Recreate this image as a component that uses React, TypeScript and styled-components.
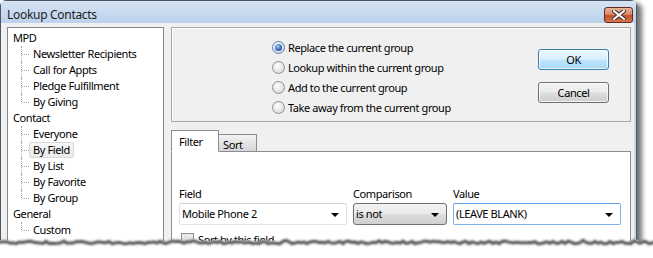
import React from 'react';
import styled, { createGlobalStyle } from 'styled-components';

const GlobalStyle = createGlobalStyle`
  html, body {
    margin: 0;
    padding: 0;
    background: #ffffff;
  }
  body {
    font-family: "Noto Sans", "Liberation Sans", sans-serif;
    font-size: 11px;
    letter-spacing: -0.4px;
    color: #000;
  }
`;

const tree = [
  { label: 'MPD', children: ['Newsletter Recipients', 'Call for Appts', 'Pledge Fulfillment', 'By Giving'] },
  { label: 'Contact', children: ['Everyone', 'By Field', 'By List', 'By Favorite', 'By Group'] },
  { label: 'General', children: ['Custom'] },
];

const modes = [
  'Replace the current group',
  'Lookup within the current group',
  'Add to the current group',
  'Take away from the current group',
];

// jagged "torn paper" edge along the bottom of the screenshot
const tornPoints = (() => {
  let s = 11;
  const rnd = () => {
    s = (s * 9301 + 49297) % 233280;
    return s / 233280;
  };
  const pts: string[] = [];
  for (let x = -2; x <= 656; x += 3) {
    const y = 5.5 + (rnd() - 0.5) * 2.6 + (rnd() > 0.85 ? -1 : 0);
    pts.push(`${x},${y.toFixed(1)}`);
  }
  return pts;
})();

export default function App() {
  return (
    <Stage>
      <GlobalStyle />
      <Window>
        <TitleBar>
          <Title>Lookup Contacts</Title>
          <CloseButton>
            <svg width="14" height="10" viewBox="0 0 14 10">
              <path d="M2 1 L12 9 M12 1 L2 9" stroke="#3b2a2a" strokeWidth="4" strokeLinecap="square" />
              <path d="M2 1 L12 9 M12 1 L2 9" stroke="#fff" strokeWidth="2" strokeLinecap="square" />
            </svg>
          </CloseButton>
        </TitleBar>

        <Client>
          <Tree>
            {tree.map((g) => (
              <div key={g.label}>
                <TreeRow>{g.label}</TreeRow>
                <Children>
                  {g.children.map((c) => (
                    <ChildRow key={c}>
                      <ChildLabel selected={c === 'By Field'}>{c}</ChildLabel>
                    </ChildRow>
                  ))}
                </Children>
              </div>
            ))}
          </Tree>

          <RightColumn>
            <ModeGroup>
              <RadioList>
                {modes.map((m, i) => (
                  <RadioRow key={m}>
                    <Radio checked={i === 0} />
                    {m}
                  </RadioRow>
                ))}
              </RadioList>
              <Buttons>
                <Button primary>OK</Button>
                <Button>Cancel</Button>
              </Buttons>
            </ModeGroup>

            <Tabs>
              <Tab active>Filter</Tab>
              <Tab>Sort</Tab>
            </Tabs>
            <TabPanel>
              <Fields>
                <FieldLabel>Field</FieldLabel>
                <FieldLabel>Comparison</FieldLabel>
                <FieldLabel>Value</FieldLabel>
                <Combo>
                  Mobile Phone 2
                  <Arrow />
                </Combo>
                <Combo variant="button">
                  is not
                  <Arrow />
                </Combo>
                <Combo variant="focus">
                  (LEAVE BLANK)
                  <Arrow />
                </Combo>
              </Fields>
              <CheckRow>
                <CheckBox />
                Sort by this field
              </CheckRow>
            </TabPanel>
          </RightColumn>
        </Client>
      </Window>

      <TornEdge width="653" height="24" viewBox="0 0 653 24">
        <defs>
          <filter id="soft" x="-5%" y="-100%" width="110%" height="300%">
            <feGaussianBlur stdDeviation="1.2" />
          </filter>
        </defs>
        <polygon points={`${tornPoints.join(' ')} 656,24 -2,24`} fill="#ffffff" />
        <polyline
          points={tornPoints.join(' ')}
          fill="none"
          stroke="#505050"
          strokeWidth="3"
          filter="url(#soft)"
          transform="translate(0 2)"
        />
      </TornEdge>
    </Stage>
  );
}

const Stage = styled.div`
  position: relative;
  width: 653px;
  height: 258px;
  overflow: hidden;
  background: #fff;
`;

const Window = styled.div`
  width: 635px;
  height: 290px;
  border: 1px solid #4b5766;
  border-bottom: none;
  border-radius: 6px 6px 0 0;
  background: linear-gradient(to right, #dfe8f3, #cfdcec 40%, #c6d8ee);
  box-shadow: 5px 3px 5px rgba(0, 0, 0, 0.55);
  display: flex;
  flex-direction: column;
`;

const TitleBar = styled.div`
  height: 24px;
  display: flex;
  align-items: center;
  justify-content: space-between;
  padding: 0 3px 0 6px;
  background: linear-gradient(to bottom, #d6e3f3, #bcd1ec);
`;

const Title = styled.span`
  font-size: 12px;
  letter-spacing: -0.3px;
  color: #1c1c1c;
  margin-top: 5px;
`;

const CloseButton = styled.div`
  width: 27px;
  height: 14px;
  margin-top: 5px;
  border: 1px solid #5e2a22;
  border-radius: 3px;
  background: linear-gradient(to bottom, #eab59a 0%, #d98a68 45%, #c2502b 55%, #d8784c 100%);
  display: flex;
  align-items: center;
  justify-content: center;
`;

const Client = styled.div`
  flex: 1;
  display: flex;
  gap: 7px;
  padding: 4px 2px 0 6px;
  margin-right: 2px;
  background: #f0f0f0;
`;

const Tree = styled.div`
  width: 155px;
  border: 1px solid #828790;
  background: #fff;
  padding: 2px 0 1px;
  align-self: flex-start;
  height: 260px;
`;

const TreeRow = styled.div`
  height: 16px;
  line-height: 16px;
  padding-left: 5px;
  white-space: nowrap;
`;

const Children = styled.div`
  padding-left: 13px;
`;

const ChildRow = styled.div`
  position: relative;
  height: 16px;
  line-height: 16px;
  padding-left: 8px;
  white-space: nowrap;

  &::before {
    content: "";
    position: absolute;
    left: 1px;
    top: 8px;
    width: 7px;
    border-top: 1px dotted #a0a0a0;
  }

  &::after {
    content: "";
    position: absolute;
    left: 0;
    top: 0;
    height: 16px;
    border-left: 1px dotted #a0a0a0;
  }

  &:last-child::after {
    height: 8px;
  }
`;

const ChildLabel = styled.span<{ selected?: boolean }>`
  display: inline-block;
  height: 14px;
  line-height: 14px;
  padding: 0 3px;
  border: 1px solid ${(p) => (p.selected ? '#d9d9d9' : 'transparent')};
  border-radius: 2px;
  background: ${(p) => (p.selected ? 'linear-gradient(#f7f7f7, #ebebeb)' : 'transparent')};
`;

const RightColumn = styled.div`
  width: 460px;
  display: flex;
  flex-direction: column;
`;

const ModeGroup = styled.div`
  height: 93px;
  border: 1px solid #a7a7a7;
  box-shadow: inset 1px 1px 0 #fff;
  display: flex;
  padding-left: 100px;
`;

const RadioList = styled.div`
  display: flex;
  flex-direction: column;
  padding-top: 9px;
`;

const RadioRow = styled.div`
  height: 20px;
  display: flex;
  align-items: center;
  gap: 3px;
  white-space: nowrap;
`;

const Radio = styled.span<{ checked?: boolean }>`
  position: relative;
  width: 11px;
  height: 11px;
  border-radius: 50%;
  border: 1px solid ${(p) => (p.checked ? '#5a7eae' : '#8f8f8f')};
  background: radial-gradient(circle at 40% 35%, #ffffff, #e2e2e2 60%, #cfcfcf);

  &::after {
    content: "";
    display: ${(p) => (p.checked ? 'block' : 'none')};
    position: absolute;
    left: 2px;
    top: 2px;
    width: 7px;
    height: 7px;
    border-radius: 50%;
    background: radial-gradient(circle at 40% 35%, #9fd0ff, #2a62b8 60%, #173d7a);
  }
`;

const Buttons = styled.div`
  margin-left: auto;
  margin-right: 21px;
  padding-top: 21px;
  display: flex;
  flex-direction: column;
  gap: 12px;
`;

const Button = styled.div<{ primary?: boolean }>`
  width: 69px;
  height: 19px;
  line-height: 19px;
  text-align: center;
  border-radius: 3px;
  border: 1px solid ${(p) => (p.primary ? '#3c7fb1' : '#707070')};
  background: ${(p) =>
    p.primary
      ? 'linear-gradient(to bottom, #eaf6fd 0%, #d9f0fc 48%, #bee6fd 52%, #a7d9f5 100%)'
      : 'linear-gradient(to bottom, #f2f2f2 0%, #ebebeb 48%, #dddddd 52%, #cfcfcf 100%)'};
  box-shadow: inset 0 0 0 1px rgba(255, 255, 255, 0.7);
`;

const Tabs = styled.div`
  display: flex;
  align-items: flex-end;
  margin-top: 9px;
  height: 20px;
`;

const Tab = styled.div<{ active?: boolean }>`
  height: ${(p) => (p.active ? '20px' : '16px')};
  line-height: ${(p) => (p.active ? '21px' : '19px')};
  padding: 0 ${(p) => (p.active ? '7px' : '4px')};
  width: ${(p) => (p.active ? '32px' : '29px')};
  border: 1px solid #898c95;
  border-bottom: ${(p) => (p.active ? '1px solid #fff' : '0')};
  margin-bottom: ${(p) => (p.active ? '-1px' : '0')};
  border-left-width: ${(p) => (p.active ? '1px' : '0')};
  background: ${(p) => (p.active ? '#fff' : 'linear-gradient(to bottom, #f3f3f3, #e4e4e4 50%, #d6d6d6)')};
  position: relative;
  z-index: ${(p) => (p.active ? 1 : 0)};
`;

const TabPanel = styled.div`
  flex: 1;
  border: 1px solid #898c95;
  background: #fff;
  padding: 32px 7px 0 7px;
`;

const Fields = styled.div`
  display: grid;
  grid-template-columns: 168px 94px 168px;
  column-gap: 6px;
  row-gap: 1px;
`;

const FieldLabel = styled.div`
  height: 18px;
  line-height: 20px;
`;

const Combo = styled.div<{ variant?: 'button' | 'focus' }>`
  position: relative;
  height: 20px;
  line-height: 20px;
  padding-left: 2px;
  border-radius: ${(p) => (p.variant === 'button' ? '3px' : '2px')};
  border: 1px solid
    ${(p) => (p.variant === 'button' ? '#707070' : p.variant === 'focus' ? '#7eb4ea' : '#dde3ea')};
  border-top-color: ${(p) => (p.variant === 'focus' ? '#569de5' : p.variant === 'button' ? '#707070' : '#c9d2dc')};
  background: ${(p) =>
    p.variant === 'button' ? 'linear-gradient(to bottom, #f2f2f2 0%, #ebebeb 48%, #dddddd 52%, #cfcfcf 100%)' : '#fff'};
  white-space: nowrap;
`;

const Arrow = styled.span`
  position: absolute;
  right: 7px;
  top: 9px;
  width: 0;
  height: 0;
  border-left: 4px solid transparent;
  border-right: 4px solid transparent;
  border-top: 4px solid #000;
`;

const CheckRow = styled.div`
  display: flex;
  align-items: center;
  gap: 4px;
  margin-top: 7px;
  padding-left: 2px;
`;

const CheckBox = styled.span`
  width: 11px;
  height: 11px;
  border: 1px solid #8f8f8f;
  background: linear-gradient(135deg, #dcdcdc, #f6f6f6);
  box-shadow: inset 0 0 0 2px #e9e9e9;
`;

const TornEdge = styled.svg`
  position: absolute;
  left: 0;
  top: 235px;
  display: block;
`;
